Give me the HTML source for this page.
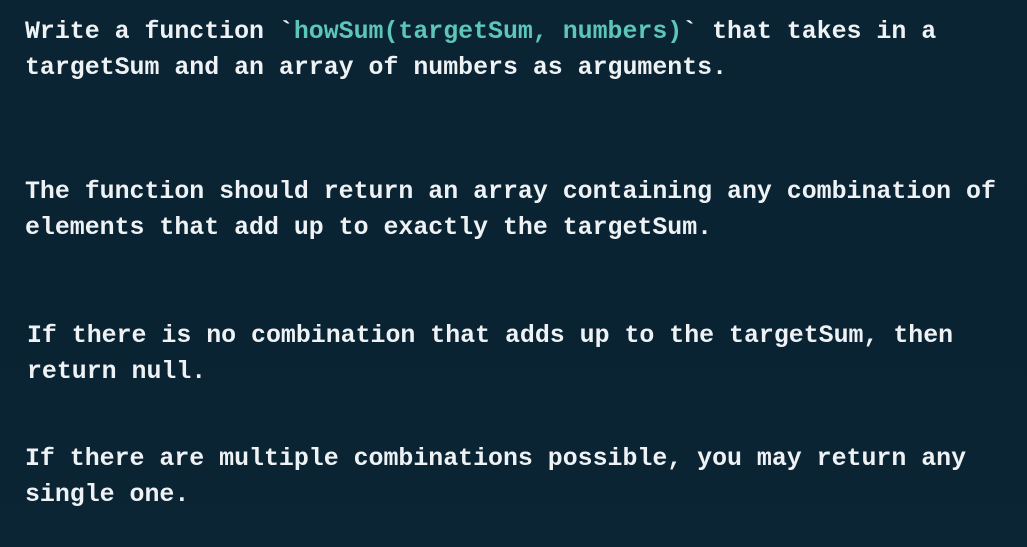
<!DOCTYPE html>
<html><head><meta charset="utf-8"><style>
html,body{margin:0;padding:0}
body{width:1027px;height:547px;overflow:hidden;background:linear-gradient(180deg,#0b2433 0%,#0a2333 60%,#0b2535 100%);font-family:"Liberation Mono",monospace;font-weight:bold;font-size:24.9px;color:#eef2f4;position:relative}
.p{position:absolute;left:25px;line-height:36px;white-space:pre}
.t{color:#5cc6be}
</style></head><body>
<div class="p" style="top:14px">Write a function `<span class="t">howSum(targetSum, numbers)</span>` that takes in a
targetSum and an array of numbers as arguments.</div>
<div class="p" style="top:174px">The function should return an array containing any combination of
elements that add up to exactly the targetSum.</div>
<div class="p" style="top:318px;left:27px">If there is no combination that adds up to the targetSum, then
return null.</div>
<div class="p" style="top:441px">If there are multiple combinations possible, you may return any
single one.</div>
</body></html>
